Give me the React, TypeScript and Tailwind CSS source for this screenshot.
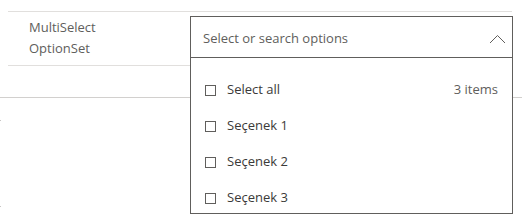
export default function App() {
  const options = ["Seçenek 1", "Seçenek 2", "Seçenek 3"];

  return (
    <div className="relative w-[522px] h-[221px] bg-white overflow-hidden text-[14px] text-[#3b3a39]" style={{ fontFamily: '"Open Sans", "Noto Sans", sans-serif' }}>
      {/* form rows */}
      <div className="pt-[11px]">
        <div className="ml-[8px] mr-[10px] border-t border-[#e1dfdd]">
          <div className="h-[54px] border-b border-[#e1dfdd] pl-[21px] pt-[5px] leading-[21px] text-[13px] text-[#605e5c]">
            <div>MultiSelect</div>
            <div>OptionSet</div>
          </div>
        </div>
        <div className="h-[32px] border-b border-[#d2d0ce]" />
      </div>

      {/* stray specks on the left edge */}
      <div className="absolute left-0 top-[120px] w-px h-px bg-[#c8c6c4]" />
      <div className="absolute left-0 top-[206px] w-px h-px bg-[#c8c6c4]" />

      {/* open dropdown */}
      <div className="absolute left-[190px] top-[16px] w-[323px] h-[198px] border border-[#605e5c] bg-white flex flex-col">
        <div className="h-[41px] shrink-0 border-b border-[#605e5c] flex items-center justify-between pl-[12px] pr-[5px] pt-[3px]">
          <span className="text-[13px] text-[#605e5c]">Select or search options</span>
          <svg width="17" height="10" viewBox="0 0 17 10" fill="none" className="mr-[1px]">
            <path d="M1 9 L8.5 1.5 L16 9" stroke="#605e5c" strokeWidth="1" />
          </svg>
        </div>
        <div className="flex flex-col pt-[14px]">
          <div className="h-[36px] flex items-center pl-[14px] pr-[14px]">
            <span className="w-[11px] h-[11px] border border-[#605e5c] mr-[11px]" />
            <span className="flex-1 text-[13px]">Select all</span>
            <span className="text-[13px] text-[#605e5c]">3 items</span>
          </div>
          {options.map((o) => (
            <div key={o} className="h-[36px] flex items-center pl-[14px]">
              <span className="w-[11px] h-[11px] border border-[#605e5c] mr-[11px]" />
              <span className="text-[13px]">{o}</span>
            </div>
          ))}
        </div>
      </div>
    </div>
  );
}
